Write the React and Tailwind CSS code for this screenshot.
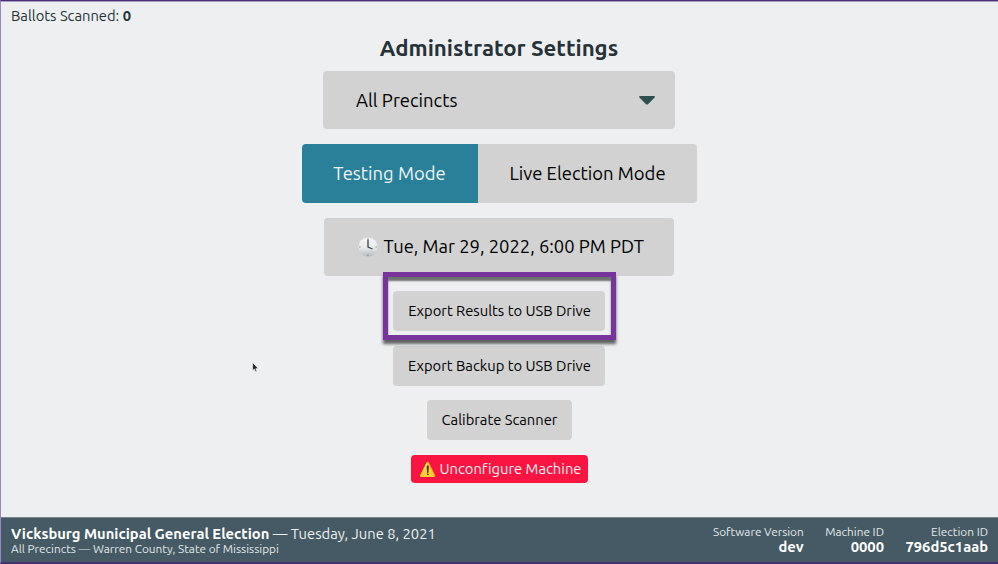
const button = "flex shrink-0 items-center whitespace-nowrap rounded-[4px] bg-[#d2d2d2] text-black";

function Meta({ label, value }) {
  return (
    <div className="flex flex-col items-end">
      <span className="text-[11.8px] leading-[15px] text-[#e3e8ea]">{label}</span>
      <span className="-mt-px text-[14.76px] font-bold leading-[17px] text-white">{value}</span>
    </div>
  );
}

function Clock() {
  return (
    <svg className="mr-[6px] mt-px" width="20" height="20" viewBox="0 0 20 20">
      <defs>
        <linearGradient id="clock-face" x1="0" y1="0" x2="0" y2="1">
          <stop offset="0" stopColor="#f4f5f6" />
          <stop offset=".55" stopColor="#e6e9eb" />
          <stop offset="1" stopColor="#b3bcc3" />
        </linearGradient>
      </defs>
      <circle cx="10" cy="10" r="9.6" fill="url(#clock-face)" />
      <path d="M10 1.200v1.400M10 17.400v1.400M1.200 10h1.400M17.400 10h1.400" stroke="#7d858a" strokeWidth="1.100" />
      <path d="M10 2.500V10l4.500 2" fill="none" stroke="#3d4347" strokeWidth="1.300" />
    </svg>
  );
}

export default function App() {
  return (
    <div className="relative flex h-[564px] w-[998px] flex-col overflow-hidden border-b-2 border-l border-t border-b-[#46316f] border-l-[#9a83cf] border-t-[#4a2f78] bg-[#edeff0] font-['Ubuntu','Noto_Sans',sans-serif] shadow-[inset_0_1px_0_#a99bc0] [font-variant-ligatures:none]">
      <header className="h-[34px] shrink-0 whitespace-nowrap pl-[10px] pt-[5px] text-[14.76px] leading-[20px] text-[#263238]">
        Ballots Scanned: <strong>0</strong>
      </header>

      <main className="flex flex-1 flex-col items-center pr-px">
        <h1 className="h-[36px] text-[22.2px] font-bold leading-[26px] text-[#263238]">Administrator Settings</h1>

        <button className={button + " h-[58px] w-[352px] justify-between pl-[33px] pr-[20px] text-[18.45px]"}>
          <span className="pt-px">All Precincts</span>
          <svg width="16" height="9" viewBox="0 0 16 9" fill="#2f4f4f">
            <path d="M1 0h14c.9 0 1.200.8.6 1.400L9.200 7.900c-.7.7-1.700.7-2.400 0L.4 1.400C-.2.8.1 0 1 0Z" />
          </svg>
        </button>

        <div className="mt-[15px] flex h-[59px] w-[395px] shrink-0 overflow-hidden rounded-[4px] whitespace-nowrap text-[18.45px]">
          <button className="w-[176px] bg-[#2a8099] text-[#edf4f5]">Testing Mode</button>
          <button className="flex-1 bg-[#d2d2d2] pl-px text-black">Live Election Mode</button>
        </div>

        <button className={button + " mt-[14.5px] h-[58.5px] w-[350px] pl-[33.5px] text-[18.4px]"}>
          <Clock />
          <span>Tue, Mar 29, 2022, 6:00 PM PDT</span>
        </button>

        <button className={button + " mt-[15px] h-[40px] w-[212px] justify-center pl-px pt-px text-[14.76px]"}>Export Results to USB Drive</button>
        <button className={button + " mt-[14.5px] h-[40px] w-[212px] justify-center pl-px pt-px text-[14.76px]"}>Export Backup to USB Drive</button>
        <button className={button + " mt-[14.5px] h-[40px] w-[145px] justify-center pl-px pt-px text-[14.76px]"}>Calibrate Scanner</button>
        <button className="mt-[15px] flex h-[28px] w-[177px] shrink-0 items-center whitespace-nowrap rounded-[4px] bg-[#fa1441] pl-[8px] pt-px text-[14.76px] text-[#fff0f2]">
          <span className="mr-[4px] w-[17px] text-[14px]">⚠️</span>
          <span>Unconfigure Machine</span>
        </button>
      </main>

      <footer className="flex h-[45px] shrink-0 justify-between whitespace-nowrap border-t border-[#77868e] bg-[#455a64] pl-[10px] pr-[10px] pt-[7px]">
        <div className="flex flex-col">
          <div className="text-[14.76px] leading-[17px] text-[#eef1f2]">
            <strong className="text-white">Vicksburg Municipal General Election</strong> — Tuesday, June 8, 2021
          </div>
          <div className="text-[11.8px] leading-[14px] text-[#e3e8ea]">All Precincts — Warren County, State of Mississippi</div>
        </div>
        <div className="-mt-px flex gap-[21.5px]">
          <Meta label="Software Version" value="dev" />
          <Meta label="Machine ID" value="0000" />
          <Meta label="Election ID" value="796d5c1aab" />
        </div>
      </footer>

      <div className="pointer-events-none absolute left-[381.5px] top-[271px] h-[68px] w-[233px] border-[5px] border-[#77349b] shadow-[0_4px_3px_0_#0009,inset_0_4px_2px_0_#0008]" />
      <svg className="pointer-events-none absolute left-[251px] top-[361px]" width="7" height="11" viewBox="0 0 7 11">
        <path d="M.6.600v8l1.800-1.500 1.300 3 1.300-.6-1.300-2.800 2.500-.2Z" fill="#222" stroke="#fff" strokeWidth=".6" />
      </svg>
    </div>
  );
}
